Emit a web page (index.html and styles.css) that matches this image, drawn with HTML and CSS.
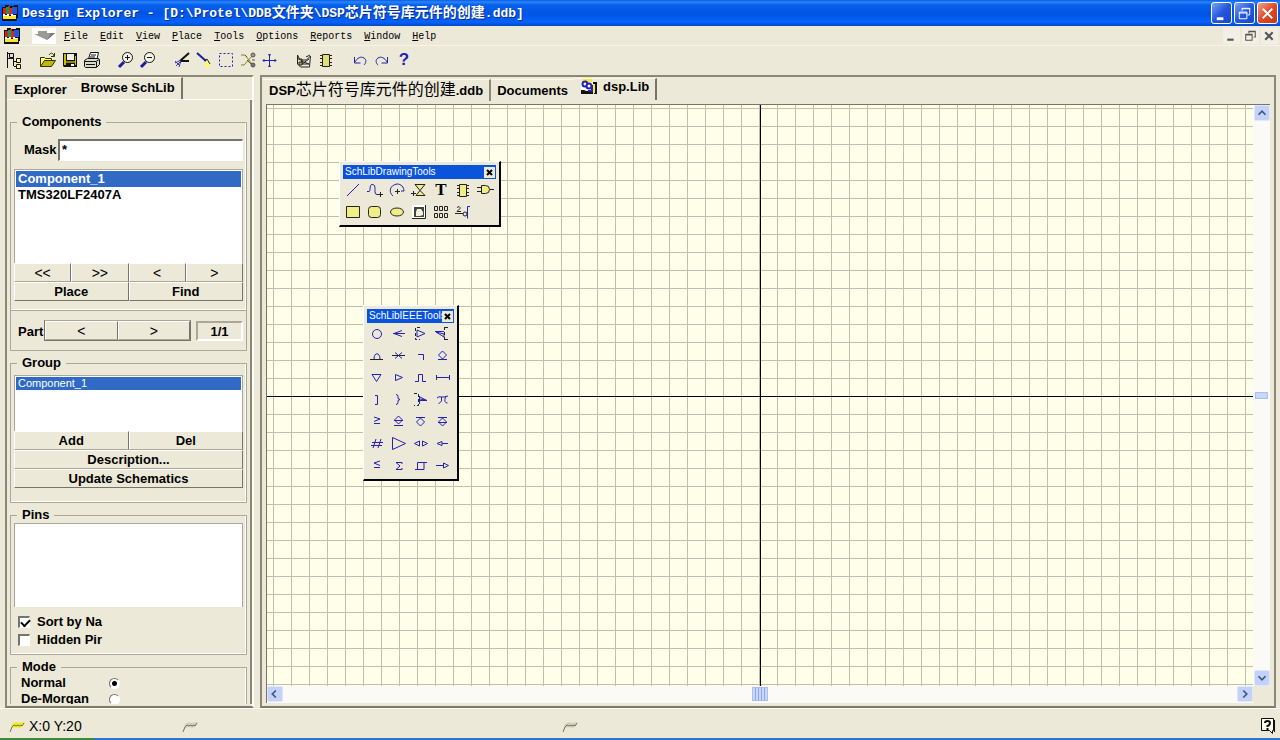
FILE: index.html
```html
<!DOCTYPE html>
<html lang="en">
<head>
<meta charset="utf-8">
<title>Design Explorer</title>
<link rel="stylesheet" href="styles.css">
</head>
<body>
<svg class="defs" aria-hidden="true">
  <symbol id="app" viewBox="0 0 16 16">
    <path fill="#101018" d="M0 2h3V0h4v1h5v-1h4v13h-1v3H0z"/>
    <path fill="#d8201c" d="M1 3h5v6H1zM6 1h2v9H6z"/><path fill="#139a50" d="M4 2h3v7H4z"/>
    <path fill="#e02818" d="M7 3h3v7H7z"/><path fill="#2058d8" d="M10 2h5v7h-5z"/>
    <path fill="#fff" d="M1 9h2v1h2V9h2v2h2V9h2v1h3v2H1z"/><path fill="#ffe428" d="M1 11h13v3H1z"/>
  </symbol>
  <symbol id="pencil" viewBox="0 0 18 14">
    <path d="M2 13l2-8 4-2 2 1 7-1-3 5-3 1-3-1-4 1z" fill="currentColor"/>
    <path d="M2 13l2-5 2-2 2 1 2-1 1 1 2-1 1 1 2-3" stroke="#77735e" fill="none"/>
  </symbol>
</svg>

<header class="titlebar">
  <svg class="app-icon"><use href="#app"/></svg>
  <h1 class="title">Design Explorer - [D:\Protel\DDB<span class="han">文件夹</span>\DSP<span class="han">芯片符号库元件的创建</span>.ddb]</h1>
  <div class="win-buttons">
    <button class="win-btn" aria-label="Minimize"><svg viewBox="0 0 20 20"><path d="M5 14h7v3H5z" fill="#fff"/></svg></button>
    <button class="win-btn" aria-label="Restore"><svg viewBox="0 0 20 20" fill="none" stroke="#fff"><path d="M7.500 7V4.500h8v7H13M7 5h9M4.500 8.500h8v7h-8zM4 9.500h9"/></svg></button>
    <button class="win-btn close" aria-label="Close"><svg viewBox="0 0 20 20"><path d="M5 5l10 10M15 5L5 15" stroke="#fff" stroke-width="2"/></svg></button>
  </div>
</header>

<nav class="menubar">
  <svg class="doc-icon"><use href="#app"/></svg>
  <button class="menu-arrow" aria-label="Menu"><svg viewBox="0 0 24 16"><path d="M6 3h9v2h8l-8 7L2 6h4z" fill="#9b9a94"/><path d="M15 12l8-7h-4z" fill="#777"/></svg></button>
  <button class="menu"><u>F</u>ile</button>
  <button class="menu"><u>E</u>dit</button>
  <button class="menu"><u>V</u>iew</button>
  <button class="menu"><u>P</u>lace</button>
  <button class="menu"><u>T</u>ools</button>
  <button class="menu"><u>O</u>ptions</button>
  <button class="menu"><u>R</u>eports</button>
  <button class="menu"><u>W</u>indow</button>
  <button class="menu"><u>H</u>elp</button>
  <div class="mdi-buttons">
    <button class="mdi" aria-label="Minimize document"><svg viewBox="0 0 16 16"><path d="M4 10h6v2H4z" fill="#555"/></svg></button>
    <button class="mdi" aria-label="Restore document"><svg viewBox="0 0 16 16" fill="none" stroke="#555"><path d="M6.500 5V3.500h6v5H11M6 3h7M3.500 6.500h6v5h-6zM3 6h7"/></svg></button>
    <button class="mdi" aria-label="Close document"><svg viewBox="0 0 16 16"><path d="M4 4l7 7M11 4l-7 7" stroke="#555" stroke-width="2"/></svg></button>
  </div>
</nav>

<div class="toolbar">
  <div class="tools">
    <button class="tool" aria-label="Toggle panel"><svg viewBox="0 0 22 22" fill="none" stroke="#111"><path d="M4.500 3v16M4 4.500h5M5 9.500h5M10.500 7v10M11 12.500h2M11 17.500h2"/><path d="M6.500 4.500h4v4h-4z" fill="#ddd"/><path d="M13.500 9.500h4v4h-4zM13.500 15.500h4v4h-4z" fill="#ffff80"/></svg></button>
  </div>
  <div class="tools">
    <button class="tool" aria-label="Open"><svg viewBox="0 0 22 22" stroke="#332f00" stroke-linejoin="round"><path d="M3.500 17V8.500h4l1 1h6V12" fill="#ffff70"/><path d="M3.500 17.500l4-6h11l-4 6z" fill="#bcb900"/><path d="M12 6c2-3 4-2 5 1M17.500 4v3.500H14" fill="none"/></svg></button>
    <button class="tool" aria-label="Save"><svg viewBox="0 0 22 22"><path d="M4 4h14v14H5l-1-1z" fill="#111"/><path d="M5 5h2v11H5zM16 7h1v9h-1z" fill="#c6c000"/><path d="M8 5h7v6H8z" fill="#eee"/><path d="M7 12h9v2H7z" fill="#8b8700"/><path d="M12 15h3v2h-3z" fill="#fff"/></svg></button>
    <button class="tool" aria-label="Print"><svg viewBox="0 0 22 22" fill="#fff" stroke="#111"><path d="M7.500 10l2-6.500h8L16 10M10 6h5M9 8h5" /><path d="M3.500 11.500l3-2h11l1 1v5l-3 3h-11l-1-1z" fill="#d9d9cc"/><path d="M4 12.500h11l3-2M15.500 13v5M5 15.500h9" fill="none"/></svg></button>
  </div>
  <div class="tools">
    <button class="tool" aria-label="Zoom in"><svg viewBox="0 0 22 22" fill="none" stroke="#111"><path d="M4 18l5-5" stroke="#1c1c9c" stroke-width="3"/><circle cx="12.500" cy="8.500" r="5" fill="#f6f5ea"/><path d="M10 8.500h5M12.500 6v5"/></svg></button>
    <button class="tool" aria-label="Zoom out"><svg viewBox="0 0 22 22" fill="none" stroke="#111"><path d="M4 18l5-5" stroke="#1c1c9c" stroke-width="3"/><circle cx="12.500" cy="8.500" r="5" fill="#f6f5ea"/><path d="M10 8.500h5"/></svg></button>
  </div>
  <div class="tools">
    <button class="tool" aria-label="Cut"><svg viewBox="0 0 22 22" fill="none"><path d="M9 12l9-8M10 12h8" stroke="#111" stroke-width="2"/><path d="M10 11l-6 3M10 12l-5 5M10 12l-2 6M4 12l5 5" stroke="#3a35b0"/></svg></button>
    <button class="tool" aria-label="Pick"><svg viewBox="0 0 22 22" fill="none"><path d="M4 4l9 8" stroke="#1c1c9c" stroke-width="2"/><path d="M12 15l3-4 2 5-3 3z" fill="#ffff50"/><path d="M11 12l3-2 3 5" stroke="#222"/></svg></button>
    <button class="tool" aria-label="Select"><svg viewBox="0 0 22 22"><path d="M4.500 4.500h13v13h-13z" fill="none" stroke="#2420b0" stroke-dasharray="2 2"/></svg></button>
    <button class="tool" aria-label="Deselect"><svg viewBox="0 0 22 22" fill="none" stroke="#555"><path d="M4 6h4l7 9M4 16h3l9-10" stroke="#8a8500"/><path d="M8 6l2 2M10 11l5 5" /><circle cx="16" cy="6" r="2" fill="#999"/><circle cx="16" cy="16" r="2" fill="#777"/><path d="M15 11h3"/></svg></button>
    <button class="tool" aria-label="Move"><svg viewBox="0 0 22 22" fill="#2420b0" stroke="#2420b0"><path d="M10.500 5v13M4 11.500h13"/><path d="M9.500 6l1-1 1 1zM9.500 17l1 1 1-1zM5 10.500l-1 1 1 1zM16 10.500l1 1-1 1z"/></svg></button>
  </div>
  <div class="tools">
    <button class="tool" aria-label="Drawing tools"><svg viewBox="0 0 22 22" fill="none" stroke="#222"><path d="M4.500 6v9l3 3h9l1-11-4 4H7zM5 10h4v5h7M8 12l8 3M9 15l7-5M13 8l4-2"/><path d="M6 13h3v3H6z" fill="#bdb72c"/></svg></button>
    <button class="tool" aria-label="IEEE symbols"><svg viewBox="0 0 22 22" stroke="#222"><path d="M7.500 5.500h7v12h-7z" fill="#e3de77"/><path d="M5 6.500h2M5 9.500h2M5 13.500h2M5 16.500h2M15 6.500h2M15 9.500h2M15 13.500h2M15 16.500h2"/></svg></button>
  </div>
  <div class="tools">
    <button class="tool" aria-label="Undo"><svg viewBox="0 0 22 22" fill="none" stroke="#2420b0"><path d="M5.500 8v6h6M6 13c2-4 6-6 9-4s2 5 0 7"/></svg></button>
    <button class="tool" aria-label="Redo"><svg viewBox="0 0 22 22" fill="none" stroke="#2420b0"><path d="M16.500 8v6h-6M16 13c-2-4-6-6-9-4s-2 5 0 7"/></svg></button>
    <button class="tool help">?</button>
  </div>
</div>

<main class="workspace">
  <aside class="panel side">
    <div class="tabs side-tabs">
      <button class="tab">Explorer</button>
      <button class="tab active">Browse SchLib</button>
    </div>
    <div class="side-body">
      <fieldset class="group components">
        <legend>Components</legend>
        <div class="mask-row"><label class="mask-label" for="mask">Mask</label><input id="mask" class="mask" type="text" value="*"></div>
        <ul class="list tall" role="listbox" aria-label="Components">
          <li class="item selected" role="option" aria-selected="true">Component_1</li>
          <li class="item" role="option">TMS320LF2407A</li>
        </ul>
        <div class="btn-row"><button class="btn step">&lt;&lt;</button><button class="btn step">&gt;&gt;</button><button class="btn step">&lt;</button><button class="btn step">&gt;</button></div>
        <div class="btn-row"><button class="btn">Place</button><button class="btn">Find</button></div>
      </fieldset>
      <div class="part">
        <span class="part-label">Part</span>
        <div class="part-nav"><button class="btn step">&lt;</button><button class="btn step">&gt;</button></div>
        <output class="part-count">1/1</output>
      </div>
      <fieldset class="group grp">
        <legend>Group</legend>
        <ul class="list short" role="listbox" aria-label="Group">
          <li class="item small selected" role="option" aria-selected="true">Component_1</li>
        </ul>
        <div class="btn-row"><button class="btn">Add</button><button class="btn">Del</button></div>
        <div class="btn-row"><button class="btn">Description...</button></div>
        <div class="btn-row"><button class="btn">Update Schematics</button></div>
      </fieldset>
      <fieldset class="group pins">
        <legend>Pins</legend>
        <ul class="list pin-list" role="listbox" aria-label="Pins"></ul>
        <label class="check"><input type="checkbox" checked>Sort by Na</label>
        <label class="check"><input type="checkbox">Hidden Pir</label>
      </fieldset>
      <fieldset class="group mode">
        <legend>Mode</legend>
        <label class="radio"><span>Normal</span><input type="radio" name="mode" checked></label>
        <label class="radio"><span>De-Morgan</span><input type="radio" name="mode"></label>
      </fieldset>
    </div>
  </aside>

  <section class="panel editor">
    <div class="tabs doc-tabs">
      <button class="tab">DSP<span class="han-tab">芯片符号库元件的创建</span>.ddb</button>
      <button class="tab">Documents</button>
      <button class="tab active"><svg class="lib-icon" viewBox="0 0 16 16"><path d="M1 0h10v3H1z" fill="#f8ee30"/><path d="M0 3h12v8H0z" fill="#fff"/><path d="M0 11h3l2 1h7v3H0zM12 3h4v12h-3v-1h1V5h-2z" fill="#111"/><path d="M12 5h2v9h-2z" fill="#f8ee30"/><g fill="#fff" stroke="#2420b0" stroke-width="2"><circle cx="4" cy="5" r="2.500"/><circle cx="8" cy="7" r="2.500"/></g><path d="M11 6v6H7" fill="none" stroke="#2420b0" stroke-width="2"/></svg>dsp.Lib</button>
    </div>
    <div class="view">
      <div class="canvas">
        <section class="float drawing">
          <div class="float-bar"><span class="float-title">SchLibDrawingTools</span><button class="float-close" aria-label="Close drawing tools"><svg viewBox="0 0 11 11"><path d="M3 3l5 5M8 3l-5 5" stroke="#000" stroke-width="2"/></svg></button></div>
          <div class="float-grid">
            <button class="tool" aria-label="Line"><svg viewBox="0 0 22 22"><path d="M5 17L17 5"/></svg></button>
            <button class="tool" aria-label="Bezier"><svg viewBox="0 0 22 22"><path d="M3 12.500h2c2 0 0-7 3-7s3 2 3 5 0 5 2 5h2"/><path class="k" d="M14 15.500h5M16.500 13v5"/></svg></button>
            <button class="tool" aria-label="Arc"><svg viewBox="0 0 22 22"><path d="M7 17c-5-4-3-11 4-12 4 0 7 3 7 7h-3"/><path class="k" d="M9 12.500h5M11.500 10v5"/></svg></button>
            <button class="tool" aria-label="Polygon"><svg viewBox="0 0 22 22"><path class="k y" d="M7 5.500h10l-5 6 5 5H8l4-5z"/><path class="k" d="M3 14.500h5M5.500 12v5"/></svg></button>
            <button class="tool letter" aria-label="Text">T</button>
            <button class="tool" aria-label="Component"><svg viewBox="0 0 22 22"><path class="k y" d="M7.500 5.500h7v12h-7z"/><path class="k" d="M5 6.500h2M5 9.500h2M5 13.500h2M5 16.500h2M15 6.500h2M15 9.500h2M15 13.500h2M15 16.500h2"/></svg></button>
            <button class="tool" aria-label="Part"><svg viewBox="0 0 22 22"><path class="k y" d="M7.500 6.500h4q4 0 4 4t-4 4h-4z"/><path class="k" d="M3 8.500h4M3 12.500h4M16 10.500h4"/></svg></button>
            <button class="tool" aria-label="Rectangle"><svg viewBox="0 0 22 22"><path class="k y" d="M4.500 5.500h13v11h-13z"/></svg></button>
            <button class="tool" aria-label="Round rectangle"><svg viewBox="0 0 22 22"><rect class="k y" x="4.500" y="5.500" width="12" height="11" rx="3"/></svg></button>
            <button class="tool" aria-label="Ellipse"><svg viewBox="0 0 22 22"><ellipse class="k y" cx="11" cy="11" rx="6.500" ry="4"/></svg></button>
            <button class="tool" aria-label="Image"><svg viewBox="0 0 22 22"><path d="M4 4h13v13H4z" fill="#fff" stroke="none"/><path class="k" d="M17.500 4v13.500H4"/><path d="M6 6h10v10H6z" fill="#444" stroke="none"/><path d="M8 15v-4l1-3h4l2 3v3l-3 1z" fill="#f4f2d8" stroke="none"/></svg></button>
            <button class="tool" aria-label="Array"><svg viewBox="0 0 22 22"><path class="k" d="M4.500 5.500h3v4h-3zM9.500 5.500h3v4h-3zM14.500 5.500h3v4h-3zM4.500 12.500h3v4h-3zM9.500 12.500h3v4h-3zM14.500 12.500h3v4h-3z"/></svg></button>
            <button class="tool" aria-label="Pin"><svg viewBox="0 0 22 22"><path class="k" d="M5 6.500l2-1 1 1v1l-3 3h4M3 12.500h8"/><circle class="k" cx="13" cy="13" r="2"/><path d="M18 5.500h-2.500v12"/></svg></button>
          </div>
        </section>
        <section class="float ieee">
          <div class="float-bar"><span class="float-title">SchLibIEEETools</span><button class="float-close" aria-label="Close IEEE tools"><svg viewBox="0 0 11 11"><path d="M3 3l5 5M8 3l-5 5" stroke="#000" stroke-width="2"/></svg></button></div>
          <div class="float-grid">
            <button class="tool" aria-label="Dot"><svg viewBox="0 0 22 22"><circle cx="11" cy="11" r="4.500"/></svg></button>
            <button class="tool" aria-label="Right left signal flow"><svg viewBox="0 0 22 22"><path d="M5 10.500h12M14 7.500l-8 3 8 3"/></svg></button>
            <button class="tool" aria-label="Clock"><svg viewBox="0 0 22 22"><path class="k" d="M10 4.500H5.500v12H10" stroke-dasharray="3 2"/><path d="M7 7l8 3.500L7 14z"/></svg></button>
            <button class="tool" aria-label="Active low input"><svg viewBox="0 0 22 22"><path d="M3 8.500h9M4 9l8 5v-3z"/><path class="k" d="M12.500 4v13M13 4.500h5M13 16.500h5" stroke-dasharray="3 2"/></svg></button>
            <button class="tool" aria-label="Analog signal in"><svg viewBox="0 0 22 22"><path class="k" d="M4 14.500h13"/><path d="M8 14c0-7 6-7 6 0"/></svg></button>
            <button class="tool" aria-label="Not logic connection"><svg viewBox="0 0 22 22"><path class="k" d="M4 10.500h13"/><path d="M7 7.500l7 6M14 7.500l-7 6"/></svg></button>
            <button class="tool" aria-label="Postponed output"><svg viewBox="0 0 22 22"><path d="M8 9.500h5.500V15"/></svg></button>
            <button class="tool" aria-label="Open collector"><svg viewBox="0 0 22 22"><path d="M10.500 6l4 4-4 4-4-4zM6 14.500h9"/></svg></button>
            <button class="tool" aria-label="Hiz"><svg viewBox="0 0 22 22"><path d="M6 7.500h9l-4.500 7z"/></svg></button>
            <button class="tool" aria-label="High current"><svg viewBox="0 0 22 22"><path d="M7.500 7.500l7 3-7 3z"/></svg></button>
            <button class="tool" aria-label="Pulse"><svg viewBox="0 0 22 22"><path d="M5 14.500h3.500v-7h4v7H16"/></svg></button>
            <button class="tool" aria-label="Delay"><svg viewBox="0 0 22 22"><path d="M4.500 8v5M17.500 8v5M4 10.500h14"/></svg></button>
            <button class="tool" aria-label="Group line"><svg viewBox="0 0 22 22"><path d="M9 6.500h2.500v9H9"/></svg></button>
            <button class="tool" aria-label="Group binary"><svg viewBox="0 0 22 22"><path d="M8 5.500q2 0 2 2v2l2 1-2 1v2q0 2-2 2"/></svg></button>
            <button class="tool" aria-label="Active low output"><svg viewBox="0 0 22 22"><path class="k" d="M4 4.500h4.500v12H4" stroke-dasharray="3 2"/><path d="M9.500 7v8M10 8l7 3.500h-7M10 10l5 1"/></svg></button>
            <button class="tool" aria-label="Pi"><svg viewBox="0 0 22 22"><path d="M5 9q2-2 4-1h3l4-1M9.500 8v4l-3 3M13.500 8q-2 6 2 6"/></svg></button>
            <button class="tool" aria-label="Greater equal"><svg viewBox="0 0 22 22"><path d="M8 6l6 2-6 2.500M8 12.500h6"/></svg></button>
            <button class="tool" aria-label="Open collector pull up"><svg viewBox="0 0 22 22"><path d="M10.500 5l4 4-4 4-4-4zM6 9.500h9M6 14.500h9"/></svg></button>
            <button class="tool" aria-label="Open emitter"><svg viewBox="0 0 22 22"><path d="M6 6.500h9M10.500 7l4 4-4 4-4-4z"/></svg></button>
            <button class="tool" aria-label="Open emitter pull up"><svg viewBox="0 0 22 22"><path d="M6 6.500h9M10.500 7l4 4-4 4-4-4zM6 11.500h9"/></svg></button>
            <button class="tool" aria-label="Digital signal in"><svg viewBox="0 0 22 22"><path d="M6 9.500h11M5 12.500h11M10 6l-3 9M15 6l-3 9"/></svg></button>
            <button class="tool" aria-label="Invertor"><svg viewBox="0 0 22 22"><path d="M4.500 4.500l13 6-13 6z"/></svg></button>
            <button class="tool" aria-label="Input output"><svg viewBox="0 0 22 22"><path d="M9.500 8v5l-5-2.500zM12.500 8v5l5-2.500z"/></svg></button>
            <button class="tool" aria-label="Shift left"><svg viewBox="0 0 22 22"><path d="M5 10.500l5-2v4zM10 10.500h6"/></svg></button>
            <button class="tool" aria-label="Less equal"><svg viewBox="0 0 22 22"><path d="M14 6L8 8l6 2.500M8 12.500h6"/></svg></button>
            <button class="tool" aria-label="Sigma"><svg viewBox="0 0 22 22"><path d="M14 9V7.500H8l4 3.500-4 3.500h6V13"/></svg></button>
            <button class="tool" aria-label="Schmitt"><svg viewBox="0 0 22 22"><path d="M5 14.500h9v-7M7.500 14V7.500H17"/></svg></button>
            <button class="tool" aria-label="Shift right"><svg viewBox="0 0 22 22"><path d="M4 10.500h7M11.500 8v5l5-2.500z"/></svg></button>
          </div>
        </section>
      </div>
      <div class="scroll vertical">
        <button class="scroll-btn" aria-label="Scroll up"><svg viewBox="0 0 16 16"><path d="M4 10l4-4 4 4"/></svg></button>
        <span class="thumb"></span>
        <button class="scroll-btn" aria-label="Scroll down"><svg viewBox="0 0 16 16"><path d="M4 6l4 4 4-4"/></svg></button>
      </div>
      <div class="scroll horizontal">
        <button class="scroll-btn" aria-label="Scroll left"><svg viewBox="0 0 16 16"><path d="M9 4L5 8l4 4"/></svg></button>
        <span class="thumb grip"></span>
        <button class="scroll-btn" aria-label="Scroll right"><svg viewBox="0 0 16 16"><path d="M6 4l4 4-4 4"/></svg></button>
      </div>
    </div>
  </section>
</main>

<footer class="status">
  <span class="cell coords"><svg class="pencil on"><use href="#pencil"/></svg>X:0 Y:20</span>
  <span class="cell middle"><svg class="pencil"><use href="#pencil"/></svg></span>
  <span class="cell rest"><svg class="pencil"><use href="#pencil"/></svg></span>
  <button class="hint" aria-label="Help advisor"><svg viewBox="0 0 16 18"><path d="M1.500 1.500h12v12h-1v3l-3-3h-8z" fill="#fffff0" stroke="#111"/><path d="M14.500 3v12" stroke="#111"/><path d="M5 6q0-2 2.500-2T10 6t-2.500 3v1M7.500 11v2" fill="none" stroke="#111" stroke-width="2"/></svg></button>
</footer>
<div class="edge"></div>
</body>
</html>
```
FILE: styles.css
```css
* { box-sizing: border-box; }

body {
  margin: 0;
  height: 100vh;
  display: flex;
  flex-direction: column;
  overflow: hidden;
  background: #ece9d8;
  color: #000;
  font: bold 13px/16px "Liberation Sans", "Noto Sans CJK SC", sans-serif;
}

button {
  margin: 0;
  padding: 0;
  border: 0;
  background: none;
  color: inherit;
  font: inherit;
}

svg { display: block; }
.defs { position: absolute; width: 0; height: 0; }

/* Title bar */
.titlebar {
  flex: none;
  height: 26px;
  display: flex;
  align-items: center;
  padding: 0 2px;
  background: linear-gradient(#0a5be8 0, #2a86fb 2px, #0560ea 5px, #0054e3 14px, #0563fb 22px, #0148c8 26px);
}
.app-icon { width: 16px; height: 16px; margin-right: 4px; }
.title {
  flex: 1;
  margin: 0;
  color: #fff;
  font: bold 13px/20px "Liberation Mono", "Noto Sans CJK SC", monospace;
  text-shadow: 1px 1px #0a2f8c;
  white-space: nowrap;
}
.han { font-size: 14px; }
.win-buttons { display: flex; gap: 2px; }
.win-btn {
  width: 21px;
  height: 22px;
  border: 1px solid #fff;
  border-radius: 3px;
  background: linear-gradient(135deg, #7ba2f2, #2457dd 50%, #1b46c8);
}
.win-btn.close { background: linear-gradient(135deg, #f0a28c, #e0492a 50%, #c13a14); }

/* Menu bar */
.menubar {
  flex: none;
  height: 20px;
  display: flex;
  align-items: center;
  padding: 0 2px 0 4px;
  border-bottom: 1px solid #f6f4ea;
  font: 10px/16px "Liberation Mono", monospace;
}
.doc-icon { width: 16px; height: 16px; margin-right: 12px; }
.menu-arrow { width: 24px; height: 16px; background: #fff; margin-right: 8px; }
.menu { margin-right: 12px; padding-top: 2px; }
.mdi-buttons { display: flex; gap: 2px; margin-left: auto; }
.mdi { width: 17px; height: 16px; background: #f2f0e6; }

/* Main toolbar */
.toolbar {
  flex: none;
  height: 28px;
  display: flex;
  align-items: center;
  gap: 12px;
  padding-left: 3px;
}
.tools { display: flex; }
.tool { width: 22px; height: 22px; }
.tool.help { color: #2420b0; font-size: 17px; line-height: 22px; }

/* Sunken panels */
.workspace {
  flex: 1;
  min-height: 0;
  display: flex;
  gap: 6px;
  padding: 1px 4px 0 5px;
}
.panel {
  display: flex;
  flex-direction: column;
  min-height: 0;
  border: 2px solid #8b8878;
  border-right-color: #fffef4;
  border-bottom-color: #7d7a6a;
}
.side { width: 249px; flex: none; }
.editor { flex: 1; min-width: 0; border-right-color: #8b8878; padding-right: 4px; }

/* Tabs */
.tabs { flex: none; display: flex; align-items: flex-start; }
.tab { height: 20px; padding: 0 6px; white-space: nowrap; border-top: 1px solid #fbfaf2; }
.tab.active { display: flex; border-right: 2px solid #77746a; }
.side-tabs { height: 23px; padding-left: 1px; border-bottom: 1px solid #fffef6; }
.side-tabs .tab { margin-top: 2px; }
.side-tabs .tab.active { height: 22px; margin-top: 0; padding: 2px 6px 0 8px; }
.doc-tabs { height: 27px; padding-left: 1px; }
.doc-tabs .tab { height: 22px; margin-top: 2px; }
.doc-tabs .tab:first-child { border-right: 2px solid #8b8878; }
.doc-tabs .tab.active { margin-top: 1px; padding-left: 7px; }
.han-tab { font-size: 16px; font-weight: 400; }
.lib-icon { flex: none; width: 16px; height: 16px; margin-right: 6px; }

/* Side panel */
.side-body {
  flex: 1;
  min-height: 0;
  overflow: hidden;
  margin-bottom: 2px;
  padding: 14px 3px 0;
  border-right: 2px solid #8b8878;
}
.group {
  min-width: 0;
  margin: 0 0 4px;
  padding: 0 3px;
  border: 1px solid #aca899;
  box-shadow: inset -1px -1px #fff;
}
.group legend { margin-left: 3px; padding: 0 5px; }
.components { margin: 0; padding-top: 9px; padding-bottom: 9px; }
.grp { padding-top: 4px; padding-bottom: 14px; }
.pins { padding-top: 0; padding-bottom: 5px; }
.mode { padding-bottom: 8px; }

.mask-row { display: flex; align-items: center; height: 22px; padding-left: 10px; margin-bottom: 8px; }
.mask-label { width: 34px; }
.mask {
  flex: 1;
  min-width: 0;
  height: 22px;
  padding: 0 2px 2px;
  border: 1px solid;
  border-color: #77746a #fff #fff #77746a;
  border-width: 2px 1px 1px 2px;
  border-radius: 0;
  background: #fff;
  font: inherit;
}
.list {
  margin: 0;
  padding: 1px;
  border: 1px solid #aca899;
  border-bottom: 0;
  background: #fff;
  list-style: none;
}
.tall { height: 94px; }
.short { height: 56px; }
.pin-list { height: 84px; margin-bottom: 6px; }
.item { padding: 0 2px; line-height: 16px; }
.item.small { font-size: 11px; font-weight: 400; line-height: 13px; }
.item.selected { background: #316ac5; color: #fff; }

.btn-row { display: flex; }
.btn {
  flex: 1;
  height: 19px;
  border: 1px solid;
  border-color: #fff #77746a #aca899 #fff;
}
.btn.step { font-size: 14px; font-weight: 400; line-height: 14px; }
.btn-row:last-child .btn { border-bottom-color: #77746a; }

.part {
  display: flex;
  align-items: center;
  height: 40px;
  padding: 0 3px 0 7px;
  margin-bottom: 4px;
  border: 1px solid #aca899;
  border-top: 0;
}
.part-label { width: 26px; padding-top: 3px; }
.part-nav { display: flex; width: 147px; margin-right: 5px; border: 1px solid #77746a; border-top-color: #aca899; }
.part-count {
  flex: 1;
  height: 20px;
  text-align: center;
  line-height: 17px;
  border: 2px solid;
  border-color: #aca899 #fff #fff #aca899;
}

.check { display: flex; align-items: center; gap: 7px; height: 18px; padding-left: 4px; }
.check input, .radio input { appearance: none; margin: 0; background: #fff; }
.check input {
  width: 12px;
  height: 12px;
  border: 1px solid #fff;
  border-top: 2px solid #77746a;
  border-left: 2px solid #77746a;
}
.check input:checked::before {
  content: "";
  display: block;
  width: 7px;
  height: 4px;
  margin: 1px;
  border-left: 2px solid #000;
  border-bottom: 2px solid #000;
  transform: rotate(-45deg);
}
.radio { display: flex; align-items: center; height: 16px; padding-left: 7px; }
.radio span { width: 88px; }
.radio input {
  width: 11px;
  height: 11px;
  border: 1px solid #fff;
  border-top-color: #77746a;
  border-left-color: #77746a;
  border-radius: 50%;
}
.radio input:checked { background: radial-gradient(circle, #000 2px, #fff 3px); }

/* Editor */
.view {
  flex: 1;
  min-height: 0;
  display: grid;
  grid-template: minmax(0, 1fr) 17px / minmax(0, 1fr) 17px;
  margin: 0 0 3px 4px;
  border-top: 1px solid #77746a;
  border-left: 1px solid #77746a;
}
.canvas {
  position: relative;
  background:
    linear-gradient(#000, #000) 50% 0 / 1px 100% no-repeat,
    linear-gradient(#000, #000) 0 calc(50% + 1px) / 100% 1px no-repeat,
    linear-gradient(90deg, #bfbfac 1px, transparent 1px) 6px 0 / 18px 18px,
    linear-gradient(#bfbfac 1px, transparent 1px) 0 3px / 18px 18px,
    #ffffe9;
}
.scroll { display: flex; justify-content: space-between; align-items: center; background: #fbfaf6; }
.vertical { flex-direction: column; }
.horizontal { padding-bottom: 1px; }
.scroll-btn { width: 16px; height: 16px; border: 1px solid #dfe7fb; border-radius: 2px; background: #c3d2fb; }
.scroll-btn svg { fill: none; stroke: #42567c; stroke-width: 2; }
.thumb { width: 13px; height: 7px; border: 1px solid #a9bff0; background: #c8d6fb; }
.thumb.grip {
  width: 16px;
  height: 14px;
  background: repeating-linear-gradient(90deg, #c8d6fb 0 2px, #8fa9e8 2px 3px);
}

/* Floating tool windows */
.float {
  position: absolute;
  padding: 3px 2px 2px;
  border: 1px solid;
  border-color: #fff #000 #000 #fff;
  border-width: 1px 2px 2px 1px;
  background: #ece9d8;
}
.drawing { left: 72px; top: 56px; width: 162px; }
.ieee { left: 96px; top: 200px; width: 96px; }
.float-bar { display: flex; align-items: center; height: 14px; margin: 0 1px; padding: 0 1px 0 2px; background: #0a54dc; }
.float-title { flex: 1; min-width: 0; overflow: hidden; color: #fff; font: 10px/14px "Liberation Sans", sans-serif; white-space: nowrap; }
.float-close { flex: none; width: 11px; height: 11px; background: #ece9d8; }
.float-grid { display: grid; grid-template-columns: repeat(auto-fill, 22px); }
.float-grid svg { fill: none; stroke: #2420b0; }
.float-grid .k { stroke: #222; }
.float-grid .y { fill: #f0ec86; }
.letter { font: bold 17px/22px "Liberation Serif", serif; }

/* Status bar */
.status {
  flex: none;
  height: 30px;
  display: flex;
  align-items: center;
  padding: 4px 4px 0 8px;
  border-top: 1px solid #fffef6;
}
.cell { display: flex; align-items: center; gap: 3px; }
.coords { width: 173px; font-size: 14px; font-weight: 400; }
.middle { width: 380px; }
.rest { flex: 1; }
.pencil { width: 18px; height: 14px; color: #d2cfbe; }
.pencil.on { color: #f4ea10; }
.hint { width: 16px; height: 18px; }
.edge { flex: none; height: 2px; background: linear-gradient(90deg, #3f8a3a 94px, #2f74d0 94px); }
```
